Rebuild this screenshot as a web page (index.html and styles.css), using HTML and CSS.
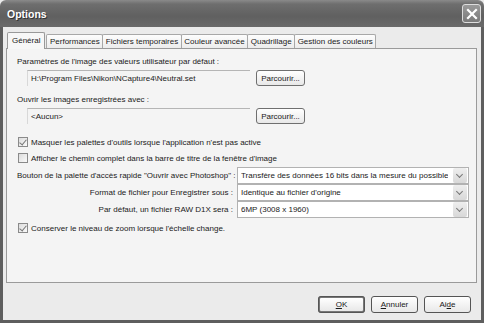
FILE: index.html
```html
<!DOCTYPE html>
<html>
<head>
<meta charset="utf-8">
<link rel="stylesheet" href="styles.css">
</head>
<body>
<div class="window">
  <div class="titlebar">
    <span class="title">Options</span>
    <span class="close"><svg width="12" height="12" viewBox="0 0 12 12"><path d="M2 2 L10 10 M10 2 L2 10" stroke="#fff" stroke-width="2.2" stroke-linecap="square"/></svg></span>
  </div>
  <div class="frame">
    <div class="tabs">
      <div class="tab active">Général</div>
      <div class="tab">Performances</div>
      <div class="tab">Fichiers temporaires</div>
      <div class="tab">Couleur avancée</div>
      <div class="tab">Quadrillage</div>
      <div class="tab">Gestion des couleurs</div>
    </div>
    <div class="panel">
      <div class="label">Paramètres de l'image des valeurs utilisateur par défaut :</div>
      <div class="fieldrow">
        <div class="field">H:\Program Files\Nikon\NCapture4\Neutral.set</div>
        <div class="btn small">Parcourir...</div>
      </div>
      <div class="label second">Ouvrir les images enregistrées avec :</div>
      <div class="fieldrow">
        <div class="field">&lt;Aucun&gt;</div>
        <div class="btn small">Parcourir...</div>
      </div>
      <div class="check first"><span class="box on"></span>Masquer les palettes d'outils lorsque l'application n'est pas active</div>
      <div class="check"><span class="box"></span>Afficher le chemin complet dans la barre de titre de la fenêtre d'image</div>
      <div class="selrows">
        <div class="sellabel">Bouton de la palette d'accès rapide "Ouvrir avec Photoshop" :</div>
        <div class="select"><span class="val">Transfère des données 16 bits dans la mesure du possible</span><span class="arrow"></span></div>
        <div class="sellabel">Format de fichier pour Enregistrer sous :</div>
        <div class="select"><span class="val">Identique au fichier d'origine</span><span class="arrow"></span></div>
        <div class="sellabel">Par défaut, un fichier RAW D1X sera :</div>
        <div class="select"><span class="val">6MP (3008 x 1960)</span><span class="arrow"></span></div>
      </div>
      <div class="check last"><span class="box on"></span>Conserver le niveau de zoom lorsque l'échelle change.</div>
    </div>
    <div class="buttons">
      <div class="btn big default"><u>O</u>K</div>
      <div class="btn big"><u>A</u>nnuler</div>
      <div class="btn big">Ai<u>d</u>e</div>
    </div>
  </div>
</div>
</body>
</html>
```
FILE: styles.css
```css
* { box-sizing: border-box; }
html, body { margin: 0; padding: 0; background: #ebebeb; }
body { font-family: "Liberation Sans", Arial, sans-serif; font-size: 8px; color: #1a1a1a; }
.window { width: 484px; height: 323px; display: flex; flex-direction: column; }
.titlebar {
  height: 27px; flex: none;
  background: linear-gradient(#8a8a8a 0%, #6e6e6e 15%, #606060 60%, #6a6a6a 100%);
  display: flex; align-items: center; justify-content: space-between;
  padding: 0 3px 0 7px;
  border-radius: 6px 6px 0 0;
}
.title { color: #fff; font-weight: bold; font-size: 10.5px; text-shadow: 1px 1px 0 #333; }
.close {
  width: 19px; height: 19px; border: 1px solid #ddd; border-radius: 3px;
  background: linear-gradient(#9a9a9a, #7a7a7a);
  display: flex; align-items: center; justify-content: center;
}
.frame {
  flex: 1; display: flex; flex-direction: column;
  border: 3px solid #5e5e5e; border-top: 0;
  background: #ebebeb;
  padding: 6px 4px 0 3px;
}
.tabs { display: flex; align-items: flex-end; height: 15px; padding-left: 1px; position: relative; z-index: 1; }
.tab {
  height: 14px; padding: 0 2.5px; line-height: 13px;
  border: 1px solid #a8a8a8; border-bottom: 0; margin-right: -1px;
  background: linear-gradient(#fdfdfd, #ececec);
  border-radius: 2px 2px 0 0; white-space: nowrap;
}
.tab.active { height: 17px; background: #f7f7f7; border-color: #999; padding: 0 4px; line-height: 16px; margin-bottom: -1px; margin-right: 1px; }
.panel {
  height: 235px; border: 1px solid #9a9a9a; background: #f4f4f4;
  padding: 7px 8px 0 10px;
  display: flex; flex-direction: column;
}
.label { height: 11px; line-height: 11px; }
.label.second { margin-top: 8px; }
.fieldrow { display: flex; align-items: center; margin-top: 3px; }
.field {
  width: 223px; height: 16px; margin-left: 10px; padding-left: 3px; line-height: 15px;
  border-top: 1px solid #b5b5b5; border-left: 1px solid #d8d8d8;
}
.btn {
  border: 1px solid #6f6f6f; border-radius: 3px;
  background: linear-gradient(#ffffff, #e8e8e8);
  display: flex; align-items: center; justify-content: center;
  color: #1a1a1a;
}
.btn.small { width: 49px; height: 16px; margin-left: 6px; }
.check { display: flex; align-items: center; height: 16px; }
.check.first { margin-top: 10px; }
.check.last { margin-top: 2px; }
.box { width: 10px; height: 10px; border: 1px solid #8a8a8a; background: linear-gradient(135deg, #dcdcdc, #fafafa); margin: 0 3px 0 1px; position: relative; }
.box.on::after {
  content: ""; position: absolute; left: 2px; top: 0px; width: 3px; height: 6px;
  border: solid #777; border-width: 0 1.5px 1.5px 0; transform: rotate(40deg);
}
.selrows { display: grid; grid-template-columns: 216px 232px; grid-auto-rows: 17px; row-gap: 0; column-gap: 4px; align-items: center; margin-top: 1px; }
.sellabel { text-align: right; white-space: nowrap; }
.select {
  height: 17px; border: 1px solid #b2b2b2; background: #fff;
  display: flex; align-items: center; justify-content: space-between; padding-left: 3px;
}
.val { white-space: nowrap; overflow: hidden; }
.arrow {
  flex: none; width: 14px; height: 15px; margin-right: 1px; background: linear-gradient(#eee, #d8d8d8); border-radius: 2px;
  position: relative;
}
.arrow::after {
  content: ""; position: absolute; left: 4px; top: 4px; width: 4px; height: 4px;
  border: solid #777; border-width: 0 1.5px 1.5px 0; transform: rotate(45deg);
}
.buttons { display: flex; justify-content: flex-end; gap: 6px; padding: 13px 6px 0 0; }
.btn.big { width: 47px; height: 17px; border-color: #555; }
.btn.default { border: 2px solid #777; outline: 1px solid #555; outline-offset: -1px; }
```
